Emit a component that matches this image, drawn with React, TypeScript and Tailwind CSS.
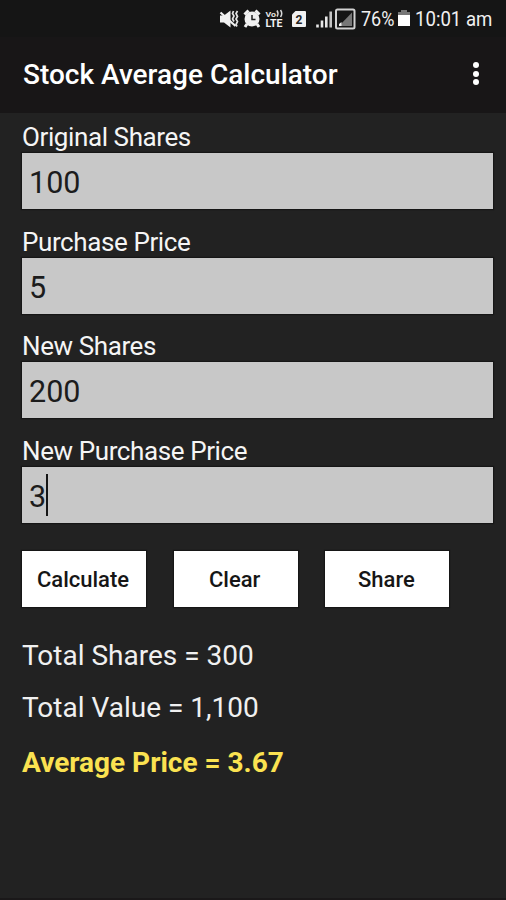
import { useState } from "react";

// --- STATUS BAR ICONS ---
function StatusIcons() {
  return (
    <svg className="shrink-0" width="140" height="24" viewBox="0 0 140 24" fill="none">
      {/* muted speaker */}
      <path d="M1 8.500h4l6.500-5v17l-6.500-5H1z" fill="#f1f1f1" />
      <path d="M1.500 5.500l15 13.500" stroke="#f1f1f1" strokeWidth="2.200" />
      <path d="M14.500 4l-1 2.500 1.500 2.500-1.500 3 1.500 2.500M18.500 4L17 6.500 18.500 9.500 17 12l1.500 2.500-1.500 3 1 2" stroke="#e4e4e4" strokeWidth="1.700" />
      {/* alarm clock */}
      <circle cx="33" cy="12" r="7.500" fill="#f1f1f1" />
      <path d="M25.500 7.500l4-4M40.500 7.500l-4-4M28 17l-2 3M38 17l2 3" stroke="#f1f1f1" strokeWidth="3" />
      <path d="M33 8v4.500h3.500" stroke="#222" strokeWidth="1.500" />
      {/* VoLTE */}
      <text x="46.500" y="9.500" fill="#e6e6e6" fontFamily="Roboto, sans-serif" fontWeight="700" fontSize="7.500" textLength="10.500" lengthAdjust="spacingAndGlyphs">Vo</text>
      <path d="M58 3.500q2 3 0 6M61.500 3q2.500 3.500 0 7" stroke="#d8d8d8" strokeWidth="1.500" />
      <text x="46.500" y="20" fill="#f1f1f1" fontFamily="Roboto, sans-serif" fontWeight="700" fontSize="10" textLength="17" lengthAdjust="spacingAndGlyphs">LTE</text>
      {/* sim 2 */}
      <path d="M76.500 4h9.500a1 1 0 0 1 1 1v14a1 1 0 0 1-1 1H74a1 1 0 0 1-1-1V7.500z" fill="#f1f1f1" />
      <text x="76.500" y="16.500" fill="#222" fontFamily="Roboto, sans-serif" fontWeight="700" fontSize="12">2</text>
      {/* signal bars */}
      <path d="M98.500 17.500v3M103 13.500v7M107.300 9.500v11" stroke="#e8e8e8" strokeWidth="2.600" />
      <path d="M111.700 4.500v16" stroke="#c4c4c4" strokeWidth="2.600" />
      {/* boxed signal */}
      <rect x="117" y="2.500" width="18.500" height="19" rx="1.500" fill="#151515" stroke="#d2d2d2" strokeWidth="2" />
      <path d="M120 19L133 5.500V19z" fill="#777" />
      <path d="M120 19v-2l2.500-2V19z" fill="#f1f1f1" />
    </svg>
  );
}

function StatusBar() {
  return (
    <div className="flex h-[37px] items-center bg-[#151515] pl-[219px] text-[20px] text-[#f0f0f0]">
      <StatusIcons />
      <span className="ml-[2px] w-[36px] origin-left scale-x-90 whitespace-nowrap">76%</span>
      <svg className="shrink-0" width="14" height="19" viewBox="0 0 14 19">
        <path d="M4 1h6v2h3v3H1V3h3z" fill="#777" />
        <path d="M1 6h12v11H1z" fill="#fff" />
      </svg>
      <span className="ml-[4px] w-[76px] origin-left scale-x-[0.93] whitespace-nowrap">10:01 am</span>
    </div>
  );
}

// --- LABEL + INPUT ---
type FieldProps = {
  label: string;
  value: string;
  onChange: (value: string) => void;
  active?: boolean;
};

function Field({ label, value, onChange, active }: FieldProps) {
  return (
    <label className="flex h-[104.500px] flex-col">
      <span className="h-[40px] pt-[9px] text-[26px] leading-[31px] tracking-[-0.4px] text-[#f5f5f5]">{label}</span>
      <span className="relative flex h-[56px] bg-[#c8c8c8] shadow-[0_0_1px_1px_#161616]">
        <input
          className="w-full bg-transparent px-[7px] pt-[4px] text-[30.500px] text-[#1c1c1c] outline-none"
          inputMode="decimal"
          value={value}
          onChange={(e) => onChange(e.target.value)}
        />
        {active && <span className="absolute top-[7px] left-[24px] h-[42px] w-[2px] bg-[#151515]" />}
      </span>
    </label>
  );
}

function ActionButton({ text, onClick }: { text: string; onClick?: () => void }) {
  return (
    <button
      onClick={onClick}
      className="h-[56px] w-[124px] bg-white pr-[2px] text-[22px] font-medium text-[#161616] shadow-[0_0_1px_1px_#161616]"
    >
      {text}
    </button>
  );
}

export default function App() {
  const [shares, setShares] = useState("100");
  const [price, setPrice] = useState("5");
  const [newShares, setNewShares] = useState("200");
  const [newPrice, setNewPrice] = useState("3");
  const [result, setResult] = useState({ shares: 300, value: 1100 });

  const calculate = () => {
    setResult({
      shares: Number(shares) + Number(newShares),
      value: Number(shares) * Number(price) + Number(newShares) * Number(newPrice),
    });
  };

  const clear = () => {
    setShares("");
    setPrice("");
    setNewShares("");
    setNewPrice("");
    setResult({ shares: 0, value: 0 });
  };

  const average = result.shares ? result.value / result.shares : 0;

  return (
    <div className="flex h-[900px] w-[506px] flex-col overflow-hidden border-b-2 border-[#1a1819] bg-[#222222] font-[Roboto,sans-serif]">
      <StatusBar />
      <header className="flex h-[76px] items-center justify-between bg-[#181617] pr-[27px] pl-[23px]">
        <h1 className="text-[28px] font-medium text-white">Stock Average Calculator</h1>
        <button className="mb-[3px] flex flex-col gap-[2.500px]" aria-label="More options">
          <span className="size-[6px] rounded-full bg-white" />
          <span className="size-[6px] rounded-full bg-white" />
          <span className="size-[6px] rounded-full bg-white" />
        </button>
      </header>

      <main className="flex flex-col pr-[13.500px] pl-[22px]">
        <Field label="Original Shares" value={shares} onChange={setShares} />
        <Field label="Purchase Price" value={price} onChange={setPrice} />
        <Field label="New Shares" value={newShares} onChange={setNewShares} />
        <Field label="New Purchase Price" value={newPrice} onChange={setNewPrice} active />

        <div className="mt-[20px] flex gap-[27.700px]">
          <ActionButton text="Calculate" onClick={calculate} />
          <ActionButton text="Clear" onClick={clear} />
          <ActionButton text="Share" />
        </div>

        <div className="mt-[32px] text-[28px] leading-[34px] text-[#f0f0f0]">
          <p>Total Shares = {result.shares.toLocaleString("en-US")}</p>
          <p className="mt-[18px]">Total Value = {result.value.toLocaleString("en-US")}</p>
          <p className="mt-[21px] font-bold text-[#fbe251]">Average Price = {average.toFixed(2)}</p>
        </div>
      </main>
    </div>
  );
}
